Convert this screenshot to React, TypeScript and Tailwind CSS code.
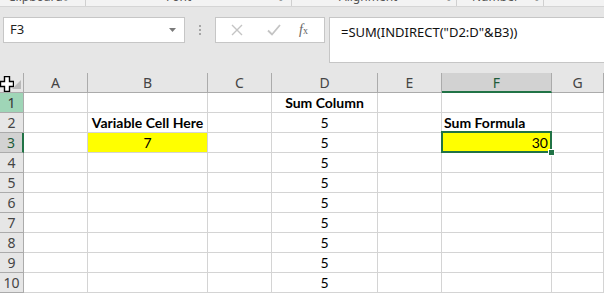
import React from "react";

const cols = ["A", "B", "C", "D", "E", "F", "G"];

function Cursor() {
  return (
    <svg width="14" height="16" viewBox="0 0 14 16" className="absolute left-0 top-[3px]">
      <path
        d="M4.5 0.5 H9.5 V5.5 H13.5 V10.5 H9.5 V15.5 H4.5 V10.5 H0.5 V5.5 H4.5 Z"
        fill="#fff"
        stroke="#000"
        strokeWidth="1.4"
      />
    </svg>
  );
}

export default function App() {
  const rows = Array.from({ length: 10 }, (_, i) => i + 1);
  const cellFont = { fontFamily: "Lato, 'Liberation Sans', sans-serif" };
  return (
    <div
      className="w-[604px] h-[293px] overflow-hidden bg-[#e6e6e6] relative"
      style={{ fontFamily: "'Noto Sans', 'Liberation Sans', sans-serif" }}
    >
      {/* ribbon group labels strip */}
      <div className="h-[7px] bg-[#f3f3f3] border-b border-[#d5d5d5] overflow-hidden relative text-[12px] text-[#555] leading-[12px]">
        <div className="flex items-start -mt-[9px]">
          <span className="ml-[8px] w-[56px]">Clipboard</span>
          <span className="w-[21px] text-[8px]">⌟</span>
          <span className="w-px h-[20px] bg-[#d0d0d0]" />
          <span className="ml-[80px] w-[113px]">Font</span>
          <span className="w-[12px] text-[8px]">⌟</span>
          <span className="w-px h-[20px] bg-[#d0d0d0]" />
          <span className="ml-[47px] w-[108px]">Alignment</span>
          <span className="w-[9px] text-[8px]">⌟</span>
          <span className="w-px h-[20px] bg-[#d0d0d0]" />
          <span className="ml-[15px] w-[63px]">Number</span>
          <span className="w-[8px] text-[8px]">⌟</span>
          <span className="w-px h-[20px] bg-[#d0d0d0]" />
        </div>
      </div>

      {/* formula bar */}
      <div className="h-[66px] flex items-start pt-[10px] pl-[3px]">
        <div className="w-[182px] h-[26px] bg-white border border-[#c6c6c6] flex items-center justify-between pl-[6px] pr-[8px] text-[13px] text-[#222]">
          <span>F3</span>
          <svg width="7" height="4" viewBox="0 0 7 4">
            <path d="M0 0 H7 L3.5 4 Z" fill="#7a7a7a" />
          </svg>
        </div>
        <div className="w-[30px] h-[26px] flex flex-col items-center justify-center gap-[2px]">
          <span className="w-[2px] h-[2px] bg-[#a6a6a6]" />
          <span className="w-[2px] h-[2px] bg-[#a6a6a6]" />
          <span className="w-[2px] h-[2px] bg-[#a6a6a6]" />
        </div>
        <div className="w-[110px] h-[26px] bg-white border border-[#c6c6c6] flex items-center">
          <svg width="12" height="12" viewBox="0 0 12 12" className="ml-[15px]">
            <path d="M1 1 L11 11 M11 1 L1 11" stroke="#c4c4c4" strokeWidth="1.4" />
          </svg>
          <svg width="14" height="12" viewBox="0 0 14 12" className="ml-[24px]">
            <path d="M1 6.5 L5 10.5 L13 1" stroke="#c4c4c4" strokeWidth="1.8" fill="none" />
          </svg>
          <span
            className="ml-[18px] text-[14px] text-[#666] italic leading-none"
            style={{ fontFamily: "'Liberation Serif', serif" }}
          >
            f<span className="text-[10px] not-italic">x</span>
          </span>
        </div>
        <div className="ml-[4px] flex-1 h-[46px] bg-white border border-[#c6c6c6] border-r-0 pl-[11px] pt-[4px] text-[13px] text-[#111] leading-[20px]">
          =SUM(INDIRECT("D2:D"&amp;B3))
        </div>
      </div>

      {/* grid */}
      <div
        className="grid bg-white"
        style={{ gridTemplateColumns: "24px 64px 120px 64px 106px 64px 110px 1fr", gridAutoRows: "20px" }}
      >
        {/* header row */}
        <div className="relative bg-[#e6e6e6] border-r border-b border-[#ababab]">
          <Cursor />
          <svg width="9" height="9" viewBox="0 0 9 9" className="absolute right-[2px] bottom-[3px]">
            <path d="M9 0 V9 H0 Z" fill="#b9b9b9" />
          </svg>
        </div>
        {cols.map((c) => {
          const sel = c === "F";
          return (
            <div
              key={c}
              className={
                sel
                  ? "bg-[#d2d2d2] border-r border-[#ababab] border-b-2 border-b-[#217346] flex items-center justify-center text-[14px] text-[#1e5c3a]"
                  : "bg-[#e6e6e6] border-r border-b border-[#ababab] flex items-center justify-center text-[14px] text-[#444]"
              }
            >
              {c}
            </div>
          );
        })}

        {rows.map((r) => {
          const hdrCls =
            r === 1
              ? "bg-[#9fd5b7] border-r border-b border-[#ababab] text-[#333]"
              : r === 3
              ? "bg-[#d2d2d2] border-r-2 border-r-[#217346] border-b border-[#ababab] text-[#1e5c3a]"
              : "bg-[#e6e6e6] border-r border-b border-[#ababab] text-[#444]";
          return (
            <React.Fragment key={r}>
              <div className={`${hdrCls} flex items-center justify-center text-[14px]`}>{r}</div>
              {cols.map((c) => {
                let content: React.ReactNode = null;
                let extra = "";
                let overlay = false;
                if (c === "D" && r === 1) {
                  content = "Sum Column";
                  extra = "font-bold justify-center";
                } else if (c === "D" && r >= 2) {
                  content = "5";
                  extra = "justify-center";
                } else if (c === "B" && r === 2) {
                  content = "Variable Cell Here";
                  extra = "font-bold justify-center";
                } else if (c === "B" && r === 3) {
                  content = "7";
                  extra = "justify-center bg-[#ffff00]";
                } else if (c === "F" && r === 2) {
                  content = "Sum Formula";
                  extra = "font-bold justify-start pl-[2px]";
                } else if (c === "F" && r === 3) {
                  content = "30";
                  extra = "justify-end pr-[3px] bg-[#ffff00]";
                  overlay = true;
                }
                return (
                  <div
                    key={c}
                    className={`relative border-r border-b border-[#d4d4d4] flex items-end pb-0 text-[14px] leading-[18px] text-black whitespace-nowrap ${extra}`}
                    style={cellFont}
                  >
                    {content}
                    {overlay && (
                      <>
                        <div className="absolute z-10 -top-[2px] -left-[1px] -right-[1px] -bottom-[1px] border-2 border-[#217346] pointer-events-none" />
                        <div className="absolute z-20 -right-[4px] -bottom-[4px] w-[7px] h-[7px] bg-[#217346] border border-white" />
                      </>
                    )}
                  </div>
                );
              })}
            </React.Fragment>
          );
        })}
      </div>
    </div>
  );
}
